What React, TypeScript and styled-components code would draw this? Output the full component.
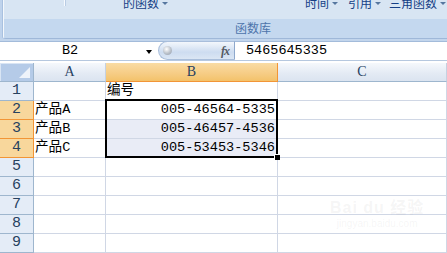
import styled, { createGlobalStyle } from 'styled-components';

const GlobalStyle = createGlobalStyle`
	html, body {
		margin: 0;
		padding: 0;
		background: #ffffff;
		overflow: hidden;
	}
	#root {
		width: 447px;
		height: 253px;
		overflow: hidden;
	}
`;

const CELL_FONT = `"Liberation Mono", "Noto Sans CJK SC", monospace`;

const Page = styled.div`
	position: relative;
	width: 447px;
	height: 253px;
	display: flex;
	flex-direction: column;
	background: #ffffff;
	overflow: hidden;
`;

/* ---------- ribbon ---------- */

const Ribbon = styled.div`
	height: 40px;
	background: #bfd3ec;
	padding-left: 3px;
	box-sizing: border-box;
`;

const RibbonGroup = styled.div`
	height: 38px;
	display: flex;
	flex-direction: column;
	border-left: 1px solid #f4f8fc;
	border-bottom: 1px solid #9fb8d9;
	border-bottom-left-radius: 3px;
	box-shadow: -1px 0 0 #a9c1e0;
	overflow: hidden;
`;

const RibbonTop = styled.div`
	height: 19px;
	background: #d8e5f3;
	display: flex;
	align-items: flex-start;
	overflow: hidden;
`;

const RibbonLabel = styled.div`
	flex: 1;
	background: #c4d8ef;
	color: #4d74ab;
	font: 12px/18px "Noto Sans CJK SC", sans-serif;
	padding-left: 231px;
`;

const Separator = styled.span<{ $left: number }>`
	display: block;
	margin-left: ${(p) => p.$left}px;
	width: 1px;
	height: 6px;
	background: #f8fbff;
	box-shadow: 1px 0 0 #b9cce4;
`;

const RibbonItem = styled.span<{ $left: number }>`
	display: flex;
	align-items: center;
	gap: 3px;
	margin-left: ${(p) => p.$left}px;
	margin-top: -5px;
	color: #153f86;
	font: 12px/16px "Noto Sans CJK SC", sans-serif;
	white-space: nowrap;
`;

const Caret = styled.span`
	display: inline-block;
	width: 0;
	height: 0;
	border-left: 3px solid transparent;
	border-right: 3px solid transparent;
	border-top: 3px solid #56779f;
	margin-top: 1px;
`;

/* ---------- formula bar ---------- */

const Strip = styled.div`
	height: 4px;
	background: #c2d5ec;
	border-bottom: 1px solid #a3bbda;
`;

const FormulaBar = styled.div`
	height: 18px;
	display: flex;
	align-items: stretch;
	background: #ffffff;
	border-bottom: 1px solid #b6c8df;
`;

const NameBox = styled.div`
	width: 158px;
	position: relative;
	display: flex;
	align-items: center;
	justify-content: center;
	padding-right: 18px;
	box-sizing: border-box;
	font: 13.5px/18px ${CELL_FONT};
	color: #000;
`;

const NameCaret = styled.span`
	position: absolute;
	right: 6px;
	top: 8px;
	border-left: 3px solid transparent;
	border-right: 3px solid transparent;
	border-top: 4px solid #000;
`;

const FxPill = styled.div`
	width: 77px;
	display: flex;
	align-items: center;
	justify-content: space-between;
	padding: 0 5px 0 4px;
	box-sizing: border-box;
	border-radius: 10px 0 0 10px;
	background: linear-gradient(#f3f7fc, #cddcf0 60%, #dbe6f4);
	border: 1px solid #a9bedb;
	border-right: 1px solid #8ea8cc;
	margin-top: -1px;
`;

const Knob = styled.span`
	width: 9px;
	height: 9px;
	border-radius: 50%;
	background: radial-gradient(circle at 40% 35%, #ffffff, #b9c0c9 55%, #8e98a6);
`;

const FxText = styled.span`
	font: italic bold 12px/16px "Liberation Serif", serif;
	color: #555a62;
	letter-spacing: -1px;
`;

const FormulaInput = styled.div`
	flex: 1;
	padding-left: 11px;
	font: 13.5px/18px ${CELL_FONT};
	color: #000;
`;

const Gap = styled.div`
	height: 4px;
	background: #ffffff;
`;

/* ---------- sheet ---------- */

const Sheet = styled.div`
	position: relative;
	display: grid;
	grid-template-columns: 34px 72px 172px 1fr;
	grid-auto-rows: 19px;
`;

const Corner = styled.div`
	position: relative;
	background: #b5cbe8;
	border-right: 1px solid #9eb6ce;
	border-bottom: 1px solid #9eb6ce;
	box-shadow: inset 1px 1px 0 #d9e5f4;
	&::after {
		content: '';
		position: absolute;
		right: 3px;
		bottom: 3px;
		border-left: 11px solid transparent;
		border-bottom: 11px solid #eef3fa;
	}
`;

const ColHead = styled.div<{ $active?: boolean }>`
	display: flex;
	align-items: center;
	justify-content: center;
	font: 14px/18px "Liberation Serif", serif;
	color: #27415f;
	border-right: 1px solid ${(p) => (p.$active ? '#f29536' : '#c5d1e1')};
	border-bottom: 1px solid ${(p) => (p.$active ? '#f29536' : '#9eb6ce')};
	background: ${(p) =>
		p.$active
			? 'linear-gradient(#f9dca4, #f6cc84 60%, #f3c26a)'
			: 'linear-gradient(#f5f8fc, #e3eaf4 60%, #dbe4f0)'};
	box-sizing: border-box;
`;

const RowHead = styled.div<{ $active?: boolean }>`
	display: flex;
	align-items: center;
	justify-content: center;
	font: 15px/18px ${CELL_FONT};
	color: #27415f;
	background: ${(p) => (p.$active ? '#f8d79c' : '#e4ecf7')};
	border-right: 1px solid ${(p) => (p.$active ? '#f29536' : '#9eb6ce')};
	border-bottom: 1px solid ${(p) => (p.$active ? '#f29536' : '#9eb6ce')};
	box-sizing: border-box;
`;

const Cell = styled.div<{ $align?: 'left' | 'right'; $selected?: boolean }>`
	display: flex;
	align-items: flex-end;
	justify-content: ${(p) => (p.$align === 'right' ? 'flex-end' : 'flex-start')};
	padding: 0 2px 0 1px;
	font: 13.6px/18px ${CELL_FONT};
	color: #000;
	white-space: nowrap;
	overflow: hidden;
	background: ${(p) => (p.$selected ? '#e9ecf6' : '#ffffff')};
	border-right: 1px solid #d0d7e5;
	border-bottom: 1px solid #d0d7e5;
	box-sizing: border-box;
`;

const SelectionFrame = styled.div`
	position: absolute;
	left: 105px;
	top: 36px;
	width: 173px;
	height: 59px;
	border: 2px solid #000;
	box-sizing: border-box;
	pointer-events: none;
	&::after {
		content: '';
		position: absolute;
		right: -4px;
		bottom: -4px;
		width: 5px;
		height: 5px;
		background: #000;
		border: 1px solid #fff;
		border-right: none;
		border-bottom: none;
	}
`;

const Watermark = styled.div`
	position: absolute;
	left: 330px;
	top: 200px;
	display: flex;
	flex-direction: column;
	align-items: center;
	color: rgba(160, 160, 160, 0.11);
	pointer-events: none;
`;

const WatermarkBrand = styled.span`
	font: bold 16px/16px "Liberation Sans", "Noto Sans CJK SC", sans-serif;
	letter-spacing: 1px;
`;

const WatermarkUrl = styled.span`
	font: 10px/12px "Liberation Sans", sans-serif;
	margin-top: 2px;
`;

const columns = [
	{ key: 'A', active: false },
	{ key: 'B', active: true },
	{ key: 'C', active: false },
];

const rows: [string, string][] = [
	['', '编号'],
	['产品A', '005-46564-5335'],
	['产品B', '005-46457-4536'],
	['产品C', '005-53453-5346'],
	['', ''],
	['', ''],
	['', ''],
	['', ''],
	['', ''],
];

const App = () => {
	return (
		<Page>
			<GlobalStyle />
			<Ribbon>
				<RibbonGroup>
					<RibbonTop>
						<Separator $left={60} />
						<RibbonItem $left={26}><Caret /></RibbonItem>
						<RibbonItem $left={26}>的函数<Caret /></RibbonItem>
						<RibbonItem $left={24}><Caret /></RibbonItem>
						<RibbonItem $left={37}><Caret /></RibbonItem>
						<RibbonItem $left={35}><Caret /></RibbonItem>
						<RibbonItem $left={23}>时间<Caret /></RibbonItem>
						<RibbonItem $left={10}>引用<Caret /></RibbonItem>
						<RibbonItem $left={8}>三角函数<Caret /></RibbonItem>
					</RibbonTop>
					<RibbonLabel>函数库</RibbonLabel>
				</RibbonGroup>
			</Ribbon>
			<Strip />
			<FormulaBar>
				<NameBox>
					B2
					<NameCaret />
				</NameBox>
				<FxPill>
					<Knob />
					<FxText>fx</FxText>
				</FxPill>
				<FormulaInput>5465645335</FormulaInput>
			</FormulaBar>
			<Gap />
			<Sheet>
				<Corner />
				{columns.map((c) => (
					<ColHead key={c.key} $active={c.active}>{c.key}</ColHead>
				))}
				{rows.map(([a, b], i) => {
					const inRange = i >= 1 && i <= 3;
					return [
						<RowHead key={`h${i}`} $active={inRange}>{i + 1}</RowHead>,
						<Cell key={`a${i}`}>{a}</Cell>,
						<Cell
							key={`b${i}`}
							$align={i === 0 ? 'left' : 'right'}
							$selected={i === 2 || i === 3}
						>
							{b}
						</Cell>,
						<Cell key={`c${i}`} />,
					];
				})}
				<SelectionFrame />
			</Sheet>
			<Watermark>
				<WatermarkBrand>Bai du 经验</WatermarkBrand>
				<WatermarkUrl>jingyan.baidu.com</WatermarkUrl>
			</Watermark>
		</Page>
	);
};

export default App;
